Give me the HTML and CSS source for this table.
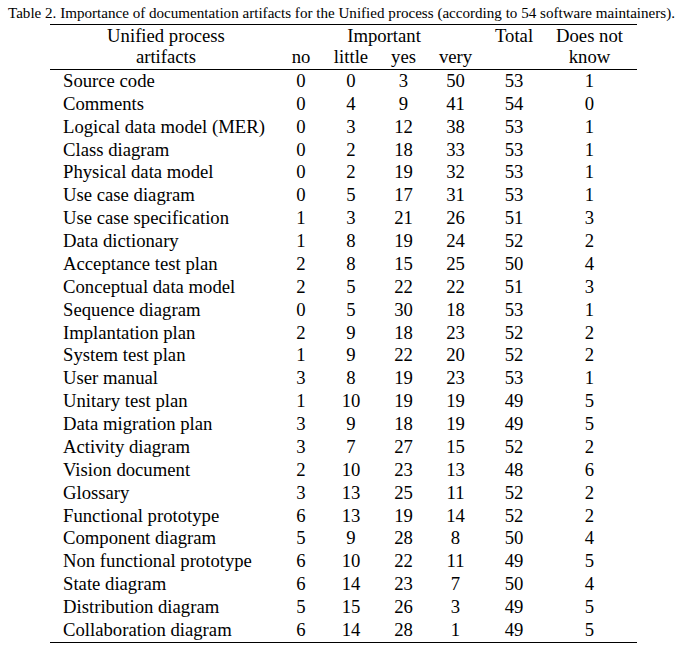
FILE: index.html
```html
<!DOCTYPE html>
<html>
<head>
<meta charset="utf-8">
<link rel="stylesheet" href="styles.css">
</head>
<body>
<div class="caption">Table 2. Importance of documentation artifacts for the Unified process (according to 54 software maintainers).</div>
<table class="tbl">
  <colgroup>
    <col class="c-name"><col class="c-no"><col class="c-little"><col class="c-yes"><col class="c-very"><col class="c-total"><col class="c-dnk">
  </colgroup>
  <thead>
    <tr class="h1">
      <th class="hname">Unified process</th>
      <th colspan="4">Important</th>
      <th>Total</th>
      <th>Does not</th>
    </tr>
    <tr class="h2">
      <th class="hname">artifacts</th>
      <th>no</th><th>little</th><th>yes</th><th>very</th>
      <th></th>
      <th>know</th>
    </tr>
  </thead>
  <tbody>
    <tr><td>Source code</td><td>0</td><td>0</td><td>3</td><td>50</td><td>53</td><td>1</td></tr>
    <tr><td>Comments</td><td>0</td><td>4</td><td>9</td><td>41</td><td>54</td><td>0</td></tr>
    <tr><td>Logical data model (MER)</td><td>0</td><td>3</td><td>12</td><td>38</td><td>53</td><td>1</td></tr>
    <tr><td>Class diagram</td><td>0</td><td>2</td><td>18</td><td>33</td><td>53</td><td>1</td></tr>
    <tr><td>Physical data model</td><td>0</td><td>2</td><td>19</td><td>32</td><td>53</td><td>1</td></tr>
    <tr><td>Use case diagram</td><td>0</td><td>5</td><td>17</td><td>31</td><td>53</td><td>1</td></tr>
    <tr><td>Use case specification</td><td>1</td><td>3</td><td>21</td><td>26</td><td>51</td><td>3</td></tr>
    <tr><td>Data dictionary</td><td>1</td><td>8</td><td>19</td><td>24</td><td>52</td><td>2</td></tr>
    <tr><td>Acceptance test plan</td><td>2</td><td>8</td><td>15</td><td>25</td><td>50</td><td>4</td></tr>
    <tr><td>Conceptual data model</td><td>2</td><td>5</td><td>22</td><td>22</td><td>51</td><td>3</td></tr>
    <tr><td>Sequence diagram</td><td>0</td><td>5</td><td>30</td><td>18</td><td>53</td><td>1</td></tr>
    <tr><td>Implantation plan</td><td>2</td><td>9</td><td>18</td><td>23</td><td>52</td><td>2</td></tr>
    <tr><td>System test plan</td><td>1</td><td>9</td><td>22</td><td>20</td><td>52</td><td>2</td></tr>
    <tr><td>User manual</td><td>3</td><td>8</td><td>19</td><td>23</td><td>53</td><td>1</td></tr>
    <tr><td>Unitary test plan</td><td>1</td><td>10</td><td>19</td><td>19</td><td>49</td><td>5</td></tr>
    <tr><td>Data migration plan</td><td>3</td><td>9</td><td>18</td><td>19</td><td>49</td><td>5</td></tr>
    <tr><td>Activity diagram</td><td>3</td><td>7</td><td>27</td><td>15</td><td>52</td><td>2</td></tr>
    <tr><td>Vision document</td><td>2</td><td>10</td><td>23</td><td>13</td><td>48</td><td>6</td></tr>
    <tr><td>Glossary</td><td>3</td><td>13</td><td>25</td><td>11</td><td>52</td><td>2</td></tr>
    <tr><td>Functional prototype</td><td>6</td><td>13</td><td>19</td><td>14</td><td>52</td><td>2</td></tr>
    <tr><td>Component diagram</td><td>5</td><td>9</td><td>28</td><td>8</td><td>50</td><td>4</td></tr>
    <tr><td>Non functional prototype</td><td>6</td><td>10</td><td>22</td><td>11</td><td>49</td><td>5</td></tr>
    <tr><td>State diagram</td><td>6</td><td>14</td><td>23</td><td>7</td><td>50</td><td>4</td></tr>
    <tr><td>Distribution diagram</td><td>5</td><td>15</td><td>26</td><td>3</td><td>49</td><td>5</td></tr>
    <tr><td>Collaboration diagram</td><td>6</td><td>14</td><td>28</td><td>1</td><td>49</td><td>5</td></tr>
  </tbody>
</table>
</body>
</html>
```

FILE: styles.css
```css
html, body {
  margin: 0;
  padding: 0;
  background: #fff;
  color: #000;
  font-family: "Liberation Serif", "Times New Roman", serif;
}

.caption {
  font-size: 15.1px;
  line-height: 20px;
  height: 24px;
  padding-top: 3px;
  box-sizing: border-box;
  padding-left: 8px;
  white-space: nowrap;
}

.tbl {
  margin-left: 50px;
  width: 587px;
  table-layout: fixed;
  border-collapse: collapse;
  border-spacing: 0;
  border-top: 1px solid #000;
  border-bottom: 1px solid #000;
  font-size: 18.7px;
}

.c-name { width: 232px; }
.c-no { width: 38px; }
.c-little { width: 62px; }
.c-yes { width: 43px; }
.c-very { width: 61px; }
.c-total { width: 56px; }
.c-dnk { width: 95px; }

.tbl th {
  font-weight: normal;
  text-align: center;
  padding: 0;
  line-height: 20px;
  height: 21px;
  white-space: nowrap;
}

.tbl .h2 th {
  padding-bottom: 2px;
  border-bottom: 1px solid #000;
}

.tbl tbody tr {
  height: 22.875px;
}

.tbl td {
  padding: 0 0 1px 0;
  height: 21.875px;
  line-height: 18px;
  text-align: center;
  vertical-align: middle;
  white-space: nowrap;
}

.tbl td:first-child {
  text-align: left;
  padding-left: 13px;
}
```
